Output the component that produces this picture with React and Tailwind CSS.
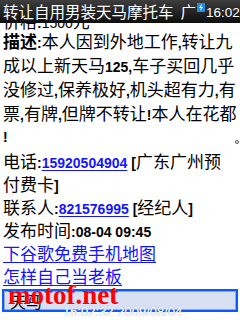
import React from 'react';

const Lat = ({ children, bold = true }) => (
  <span className={bold ? "font-['Liberation_Sans',sans-serif] text-[14px] font-bold" : "font-['Liberation_Sans',sans-serif] text-[14px] font-normal"}>
    {children}
  </span>
);

const Line = ({ children, tall = false, className = '' }) => (
  <div className={`${tall ? 'h-[24px] leading-[24px]' : 'h-[23px] leading-[23px]'} whitespace-nowrap ${className}`}>{children}</div>
);

const BoltIcon = () => (
  <svg width="8" height="9" viewBox="0 0 8 9" className="shrink-0">
    <rect x="0" y="0" width="8" height="9" fill="#1e8fe6" />
    <path d="M4.8 0.8 L2 5 L3.9 5 L3.2 8.2 L6 3.9 L4.1 3.9 Z" fill="#ffffff" />
  </svg>
);

export default function App() {
  return (
    <div className="relative w-[240px] h-[320px] overflow-hidden bg-white font-['Noto_Sans_CJK_SC',sans-serif] text-black">
      <div className="relative z-10 flex h-[23px] items-center bg-gradient-to-b from-[#3e3e3e] to-[#0e0e0e] pl-[3px] text-white">
        <span className="text-[15.5px] leading-none whitespace-nowrap">转让自用男装天马摩托车</span>
        <span className="ml-[7px] text-[15.5px] leading-none">广</span>
        <span className="ml-[1px] -mt-[9px]">
          <BoltIcon />
        </span>
        <span className="ml-[1px] mt-[2px] font-['Liberation_Sans',sans-serif] text-[13.5px] leading-none whitespace-nowrap">16:02</span>
      </div>

      <div className="h-[297px] overflow-hidden">
        <div className="pl-[3px] text-[17px]">
          <div className="-mt-[14px] h-[20px] leading-[24px] whitespace-nowrap">
            价格<Lat>:</Lat><Lat bold={false}>1500</Lat>元
          </div>
          <Line tall>
            <b className="font-bold">描述</b><Lat>:</Lat>本人因到外地工作<Lat>,</Lat>转让九
          </Line>
          <Line tall>
            成以上新天马<Lat>125</Lat><Lat>,</Lat>车子买回几乎
          </Line>
          <Line tall>
            没修过<Lat>,</Lat>保养极好<Lat>,</Lat>机头超有力<Lat>,</Lat>有
          </Line>
          <Line tall>
            票<Lat>,</Lat>有牌<Lat>,</Lat>但牌不转让<Lat>!</Lat>本人在花都
          </Line>
          <Line tall className="flex items-center justify-between pr-[1px]">
            <Lat>!</Lat>
            <span className="mt-[10px] h-[4px] w-[4px] rounded-full border border-[#555]" />
          </Line>
          <Line>
            电话<Lat>:</Lat>
            <a className="text-[#1414ff] underline decoration-[#1414ff] underline-offset-2">
              <Lat>15920504904</Lat>
            </a>
            <Lat> [</Lat>广东广州预
          </Line>
          <Line>
            付费卡<Lat>]</Lat>
          </Line>
          <Line>
            联系人<Lat>:</Lat>
            <a className="text-[#1414ff] underline decoration-[#1414ff] underline-offset-2">
              <Lat>821576995</Lat>
            </a>
            <Lat> [</Lat>经纪人<Lat>]</Lat>
          </Line>
          <Line>
            发布时间<Lat>:08-04 09:45</Lat>
          </Line>
          <Line>
            <a className="text-[#1414ff] underline decoration-[#1414ff] underline-offset-[2px]">下谷歌免费手机地图</a>
          </Line>
          <Line>
            <a className="text-[#1414ff] underline decoration-[#1414ff] underline-offset-[2px]">怎样自己当老板</a>
          </Line>
        </div>

        <div className="mx-[2px] mt-[2px] h-[23px] border-2 border-[#0a5aff]">
          <div className="flex h-full items-center border border-[#9aa6bc] bg-[#d8e1f3] pl-[5px]">
            <span className="text-[16px] leading-none">天马</span>
          </div>
        </div>
      </div>

      <div className="absolute left-[8px] top-[282px] font-['Liberation_Serif',serif] text-[27px] font-bold leading-none text-[#ff0000]">
        motof.net
      </div>
      <div className="absolute left-[63px] top-[305px] font-['Liberation_Sans',sans-serif] text-[13px] leading-none text-white [text-shadow:0_0_1px_#8a93a8]">
        16:02:32 2009/08/04
      </div>
    </div>
  );
}
